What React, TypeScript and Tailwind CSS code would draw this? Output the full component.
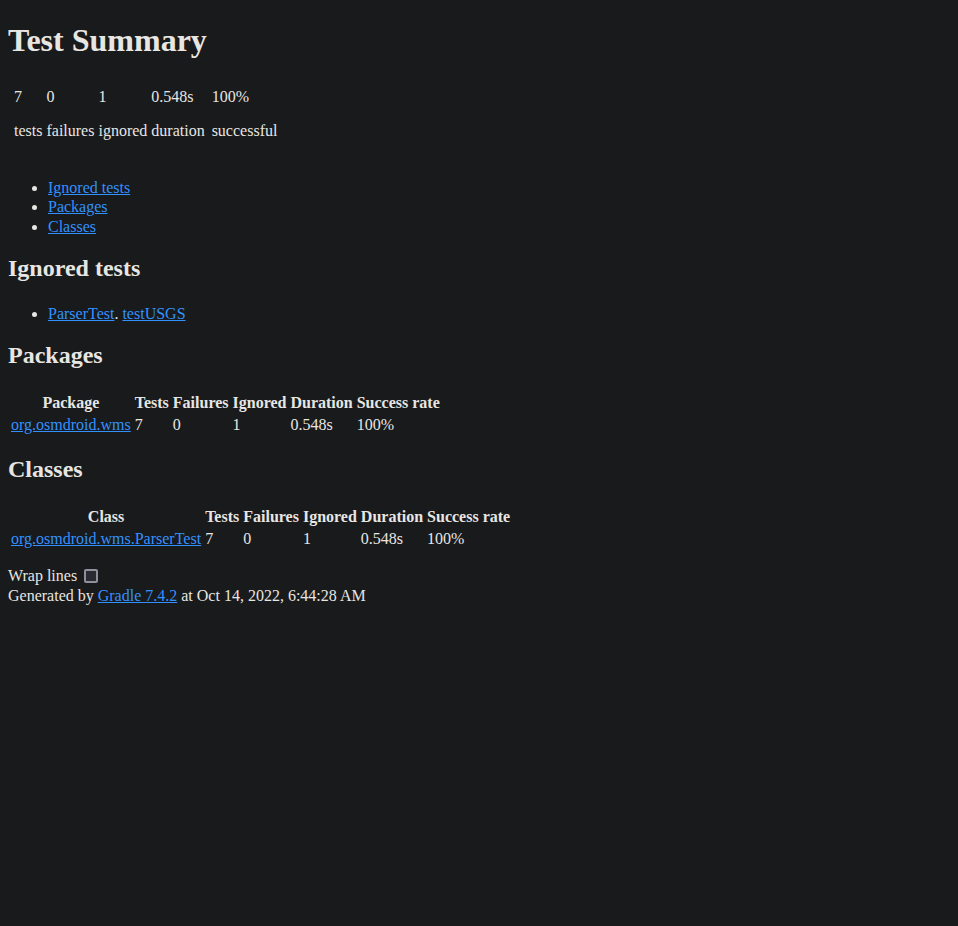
import React from "react";

const link = "text-[#3391ff] underline";
const cell = "p-px text-left align-middle";
const head = "p-px text-center align-middle font-bold";
const h2 = "text-[24px] font-bold leading-[normal]";

function InfoBox({ value, label }: { value: string; label: string }) {
  return (
    <div>
      <div>{value}</div>
      <p className="my-4">{label}</p>
    </div>
  );
}

type Row = {
  name: string;
  tests: string;
  failures: string;
  ignored: string;
  duration: string;
  rate: string;
};

function ResultTable({ title, rows }: { title: string; rows: Row[] }) {
  return (
    <table className="border-separate border-spacing-[2px]">
      <thead>
        <tr>
          <th className={head}>{title}</th>
          <th className={head}>Tests</th>
          <th className={head}>Failures</th>
          <th className={head}>Ignored</th>
          <th className={head}>Duration</th>
          <th className={head}>Success rate</th>
        </tr>
      </thead>
      <tbody>
        {rows.map((r) => (
          <tr key={r.name}>
            <td className={cell}>
              <a href="#" className={link}>
                {r.name}
              </a>
            </td>
            <td className={cell}>{r.tests}</td>
            <td className={cell}>{r.failures}</td>
            <td className={cell}>{r.ignored}</td>
            <td className={cell}>{r.duration}</td>
            <td className={cell}>{r.rate}</td>
          </tr>
        ))}
      </tbody>
    </table>
  );
}

export default function App() {
  const stats = [
    { value: "7", label: "tests" },
    { value: "0", label: "failures" },
    { value: "1", label: "ignored" },
    { value: "0.548s", label: "duration" },
  ];

  return (
    <div className="flow-root min-h-screen bg-[#181a1b] text-[#e8e6e3] font-['Liberation_Serif','Times_New_Roman',serif] text-[16px] leading-[normal]">
      <div className="m-2">
        <h1 className="my-[21.44px] text-[32px] font-bold leading-[39px]">Test Summary</h1>

        <div>
          <table className="border-separate border-spacing-[2px]">
            <tbody>
              <tr>
                <td className={cell}>
                  <div>
                    <table className="border-separate border-spacing-[2px]">
                      <tbody>
                        <tr>
                          {stats.map((s) => (
                            <td key={s.label} className={cell}>
                              <InfoBox value={s.value} label={s.label} />
                            </td>
                          ))}
                        </tr>
                      </tbody>
                    </table>
                  </div>
                </td>
                <td className={cell}>
                  <InfoBox value="100%" label="successful" />
                </td>
              </tr>
            </tbody>
          </table>
        </div>

        <div>
          <ul className="mt-[17px] mb-4 list-disc pl-10 leading-[18px]">
            <li>
              <a href="#" className={link}>
                Ignored tests
              </a>
            </li>
            <li className="mt-[1.5px]">
              <a href="#" className={link}>
                Packages
              </a>
            </li>
            <li className="mt-[1.5px]">
              <a href="#" className={link}>
                Classes
              </a>
            </li>
          </ul>

          <div>
            <h2 className={`mt-[18.92px] mb-[23.5px] ${h2}`}>Ignored tests</h2>
            <ul className="my-4 list-disc pl-10">
              <li>
                <a href="#" className={link}>
                  ParserTest
                </a>
                .{" "}
                <a href="#" className={link}>
                  testUSGS
                </a>
              </li>
            </ul>
          </div>

          <div>
            <h2 className={`mt-[18.92px] mb-[21.5px] ${h2}`}>Packages</h2>
            <ResultTable
              title="Package"
              rows={[
                { name: "org.osmdroid.wms", tests: "7", failures: "0", ignored: "1", duration: "0.548s", rate: "100%" },
              ]}
            />
          </div>

          <div>
            <h2 className={`mt-[18.92px] mb-[22.5px] ${h2}`}>Classes</h2>
            <ResultTable
              title="Class"
              rows={[
                {
                  name: "org.osmdroid.wms.ParserTest",
                  tests: "7",
                  failures: "0",
                  ignored: "1",
                  duration: "0.548s",
                  rate: "100%",
                },
              ]}
            />
          </div>
        </div>

        <div className="mt-4">
          <div className="h-[20px] leading-[18px]">
            <label>
              Wrap lines
              <input
                type="checkbox"
                autoComplete="off"
                className="ml-[7px] mt-[2px] h-[14px] w-[14px] appearance-none rounded-[2px] border-2 border-[#8f8f9d] bg-[#2b2a33] align-top"
              />
            </label>
          </div>
          Generated by{" "}
          <a href="#" className={link}>
            Gradle 7.4.2
          </a>{" "}
          at Oct 14, 2022, 6:44:28 AM
        </div>
      </div>
    </div>
  );
}
